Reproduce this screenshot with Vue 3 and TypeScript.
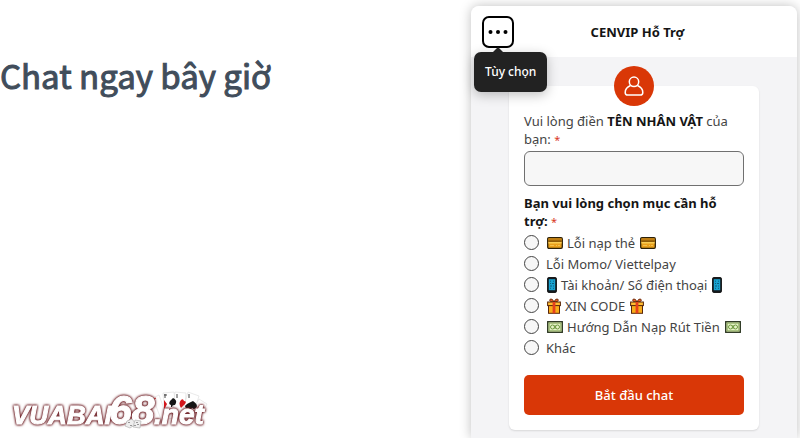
<script setup lang="ts">
import { ref } from 'vue'

type IconName = 'credit' | 'phone' | 'gift' | 'money'

interface Topic {
  id: string
  text: string
  icon?: IconName
}

const topics: Topic[] = [
  { id: 'card', text: 'Lỗi nạp thẻ', icon: 'credit' },
  { id: 'momo', text: 'Lỗi Momo/ Viettelpay' },
  { id: 'account', text: 'Tài khoản/ Số điện thoại', icon: 'phone' },
  { id: 'code', text: 'XIN CODE', icon: 'gift' },
  { id: 'guide', text: 'Hướng Dẫn Nạp Rút Tiền', icon: 'money' },
  { id: 'other', text: 'Khác' },
]

const characterName = ref('')
const topic = ref('')
</script>

<template>
  <svg class="sprite" aria-hidden="true">
    <symbol id="icon-credit" viewBox="0 0 16 12">
      <rect x="0.7" y="0.7" width="14.6" height="10.6" rx="1.2" fill="#e9a01c" stroke="#2c2008" stroke-width="1.3" />
      <rect x="1.4" y="1.4" width="13.2" height="1.8" fill="#c07d12" />
      <rect x="1.4" y="3.2" width="13.2" height="1.8" fill="#8d5a08" />
      <rect x="1.4" y="5" width="13.2" height="1.5" fill="#f9cd55" />
      <path d="M3 8.500h4M9 8.500h1M11 8.500h2" stroke="#f5c95c" stroke-width="0.8" />
    </symbol>
    <symbol id="icon-phone" viewBox="0 0 10 16">
      <rect x="0.6" y="0.6" width="8.8" height="14.8" rx="1" fill="#151b20" stroke="#101010" />
      <rect x="1.8" y="2.2" width="6.4" height="11" fill="#1aa3d0" />
      <path d="M3 4.2h1M6 4.2h1M3 6.5h1M5 6.5h2M3 9h2M6 9h1M3 11.3h1M6 11.3h1" stroke="#0c5f80" />
    </symbol>
    <symbol id="icon-gift" viewBox="0 0 14 16">
      <path d="M7 4C4 4 2.200 3 2.800 1.700S6 1 7 4C8 1 10.600 .4 11.200 1.700S10 4 7 4Z" fill="#f0642a" stroke="#6b2605" />
      <rect x="1.500" y="7" width="11" height="8.300" fill="#f9ad19" stroke="#59260a" />
      <rect x="0.600" y="4" width="12.800" height="3.600" fill="#ffbd31" stroke="#59260a" />
      <rect x="5.600" y="4" width="2.800" height="11.300" fill="#e5401d" />
    </symbol>
    <symbol id="icon-money" viewBox="0 0 16 12">
      <rect x="0.7" y="0.7" width="14.6" height="10.6" fill="#cde3a2" stroke="#28331f" stroke-width="1.3" />
      <rect x="2.300" y="2.300" width="11.400" height="7.400" fill="#e7f3c8" stroke="#8fae65" stroke-width="0.7" />
      <circle cx="5.500" cy="6" r="2" fill="none" stroke="#6e9840" />
      <circle cx="10.500" cy="6" r="2" fill="none" stroke="#6e9840" />
      <path d="M8 4v4" stroke="#6e9840" />
    </symbol>
  </svg>

  <div class="page">
    <main class="intro">
      <h1>Chat ngay bây giờ</h1>
      <svg class="logo" viewBox="0 0 220 50" role="img" aria-label="VUABAI68.net">
        <g class="playing-cards">
          <path d="m153 10 6-3 9 25-6 2Z" />
          <path d="m163 5 11-1 3 26-12 1Z" />
          <path d="m175 4 11 1-2 26-12-1Z" />
          <path d="m188 4 11 4-8 25-10-4Z" />
          <path d="m199 11 8 5-9 17-8-6Z" />
        </g>
        <path d="M165 6v4M167 7h-3M177 6v4M189 6v4" stroke="#444" fill="none" />
        <path d="m154 11 2-1" stroke="#c22" />
        <path d="M164 12l3 4-3 6Z" fill="#d3151b" />
        <path d="M173 10q4 2 3 5q-1 3-3 2l-1 2h-1v-2q-3-1-1-4Z" fill="#151515" />
        <path d="M181 12q2-2 3 1q3 0 1 3l-4 4q-3-5 0-8Z" fill="#d3151b" />
        <path d="M193 13q6 4 3 7q-2 2-4 0l-2 3h-1v-3q-4 1-4-2q1-2 8-5Z" fill="#151515" />
        <g class="logo-text">
          <text x="12" y="36" font-size="26">VUABAI</text>
          <text x="109" y="36" font-size="41">68</text>
          <text x="154" y="36" font-size="28">.net</text>
        </g>
        <g fill="#eee" stroke="#aaa" stroke-width="0.6">
          <path d="m127 33 5-2 4 5-6 4-5-2Z" />
          <path d="m135 32 6 1-1 7-7-1Z" />
        </g>
        <path d="M129 34v1M131 37v1M137 34v1M138 36v1M135 37v1" stroke="#444" />
      </svg>
    </main>

    <section class="widget" aria-label="CENVIP Hỗ Trợ">
      <header class="bar">
        <div class="menu">
          <button class="menu-button" type="button" aria-describedby="menu-tip" aria-label="Tùy chọn">
            <svg viewBox="0 0 20 6" aria-hidden="true">
              <circle cx="2.500" cy="3" r="2" />
              <circle cx="10" cy="3" r="2" />
              <circle cx="17.500" cy="3" r="2" />
            </svg>
          </button>
          <div id="menu-tip" class="tip" role="tooltip">Tùy chọn</div>
        </div>
        <h2>CENVIP Hỗ Trợ</h2>
      </header>

      <div class="content">
        <form class="card" @submit.prevent>
          <div class="avatar">
            <svg viewBox="0 0 20 20" fill="none" stroke="#fff" stroke-width="1.500" aria-hidden="true">
              <circle cx="10" cy="5.800" r="4.700" />
              <path d="M6.500 9.500C3 11 1.200 13.300 1.200 16.400C1.200 18.200 2 19 3.800 19H16.200C18 19 18.800 18.200 18.800 16.400C18.800 13.300 17 11 13.500 9.500" />
            </svg>
          </div>

          <label class="prompt" for="character">
            Vui lòng điền <strong>TÊN NHÂN VẬT</strong> của bạn:&nbsp;<span class="required">*</span>
          </label>
          <input id="character" v-model="characterName" class="field" type="text" required />

          <fieldset>
            <legend>Bạn vui lòng chọn mục cần hỗ trợ:&nbsp;<span class="required">*</span></legend>
            <label v-for="item in topics" :key="item.id" class="option">
              <input v-model="topic" type="radio" name="topic" :value="item.id" />
              <span class="option-text">
                <svg v-if="item.icon" :class="['emoji', item.icon]" aria-hidden="true"><use :href="`#icon-${item.icon}`" /></svg>
                <span>{{ item.text }}</span>
                <svg v-if="item.icon" :class="['emoji', item.icon]" aria-hidden="true"><use :href="`#icon-${item.icon}`" /></svg>
              </span>
            </label>
          </fieldset>

          <button class="submit" type="submit">Bắt đầu chat</button>
        </form>
      </div>
    </section>
  </div>
</template>

<style>
body {
  background: #fff;
}
</style>

<style scoped>
* {
  box-sizing: border-box;
}

.sprite {
  position: absolute;
  width: 0;
  height: 0;
}

.page {
  display: flex;
  min-height: 100vh;
  padding-right: 3px;
  overflow: hidden;
  font-family: "Noto Sans", "Open Sans", sans-serif;
  font-size: 13px;
  line-height: 18px;
  color: #444;
}

.intro {
  display: flex;
  flex: 1;
  flex-direction: column;
  justify-content: space-between;
  align-items: flex-start;
  padding-top: 48px;
}

h1 {
  margin: 0;
  font-family: "Noto Sans CJK SC", "Noto Sans", sans-serif;
  font-size: 33px;
  font-weight: 400;
  line-height: 54px;
  color: #414d5b;
  -webkit-text-stroke: 1px #414d5b;
}

.logo {
  width: 220px;
  height: 50px;
}

.playing-cards {
  fill: #fff;
  stroke: #dcdcdc;
  stroke-width: 0.6px;
}

.logo-text {
  font-family: "Liberation Sans", Arial, sans-serif;
  font-weight: bold;
  font-style: italic;
  fill: #fff;
  stroke: #fff;
  stroke-width: 1px;
  filter: drop-shadow(0 0 1px #6b1a20) drop-shadow(0 0 1px #6b1a20);
}

.widget {
  display: flex;
  flex: 0 0 326px;
  flex-direction: column;
  margin-top: 6px;
  border-radius: 8px 8px 0 0;
  background: #f4f4f6;
  box-shadow: 0 0 12px rgba(0, 0, 0, 0.25);
}

.bar {
  display: grid;
  grid-template-columns: 32px 1fr 32px;
  align-items: center;
  height: 51px;
  padding: 0 4px 0 11px;
  border-radius: 8px 8px 0 0;
  background: #fff;
}

h2 {
  margin: 0;
  font-size: 13px;
  font-weight: 700;
  line-height: 18px;
  text-align: center;
  color: #151515;
}

.menu {
  position: relative;
}

.menu-button {
  display: flex;
  align-items: center;
  justify-content: center;
  width: 32px;
  height: 32px;
  padding: 0;
  border: 2px solid #000;
  border-radius: 7px;
  background: #fff;
}

.menu-button svg {
  width: 20px;
  height: 6px;
}

.tip {
  position: absolute;
  top: 36px;
  left: -8px;
  z-index: 1;
  padding: 11px;
  border-radius: 7px;
  background: #222;
  box-shadow: 0 3px 12px rgba(0, 0, 0, 0.25);
  font-size: 12px;
  font-weight: 500;
  white-space: nowrap;
  color: #fff;
}

.tip::before {
  position: absolute;
  top: -5px;
  left: 19px;
  border: 5px solid transparent;
  border-top: 0;
  border-bottom-color: #222;
  content: "";
}

.content {
  flex: 1;
  padding: 29px 38px 8px;
}

.card {
  position: relative;
  display: flex;
  flex-direction: column;
  padding: 26px 15px 15px;
  border-radius: 6px;
  background: #fff;
  box-shadow: 0 1px 2px rgba(0, 0, 0, 0.12);
}

.avatar {
  position: absolute;
  top: -20px;
  left: calc(50% - 20px);
  display: flex;
  align-items: center;
  justify-content: center;
  width: 40px;
  height: 40px;
  border-radius: 50%;
  background: #d93707;
}

.avatar svg {
  width: 20px;
  height: 20px;
}

strong,
legend {
  font-weight: 700;
  color: #151515;
}

.required {
  font-size: 11px;
  font-weight: 400;
  line-height: 12px;
  color: #d9381e;
}

.field {
  width: 100%;
  height: 35px;
  margin: 3px 0 8px;
  padding: 0 8px;
  border: 1px solid #707070;
  border-radius: 6px;
  background: #f7f7f7;
  font: inherit;
}

fieldset {
  min-width: 0;
  margin: 0;
  padding: 0;
  border: 0;
}

legend {
  padding: 0 0 2px;
}

.option {
  display: flex;
  align-items: center;
  gap: 7px;
  height: 21px;
}

.option input {
  flex: none;
  width: 15px;
  height: 15px;
  margin: 0;
  border: 1px solid #444;
  border-radius: 50%;
  background: #f7f7f7;
  appearance: none;
}

.option input:checked {
  border: 5px solid #d93707;
}

.option-text {
  display: flex;
  align-items: center;
  gap: 4px;
}

.emoji {
  width: 16px;
  height: 12px;
  margin-left: 1px;
}

.emoji.phone {
  width: 10px;
  height: 16px;
}

.emoji.gift {
  width: 14px;
  height: 16px;
}

.submit {
  height: 40px;
  margin-top: 17px;
  padding: 0;
  border: 0;
  border-radius: 5px;
  background: #d93707;
  font: inherit;
  font-weight: 500;
  color: #fff;
}
</style>
